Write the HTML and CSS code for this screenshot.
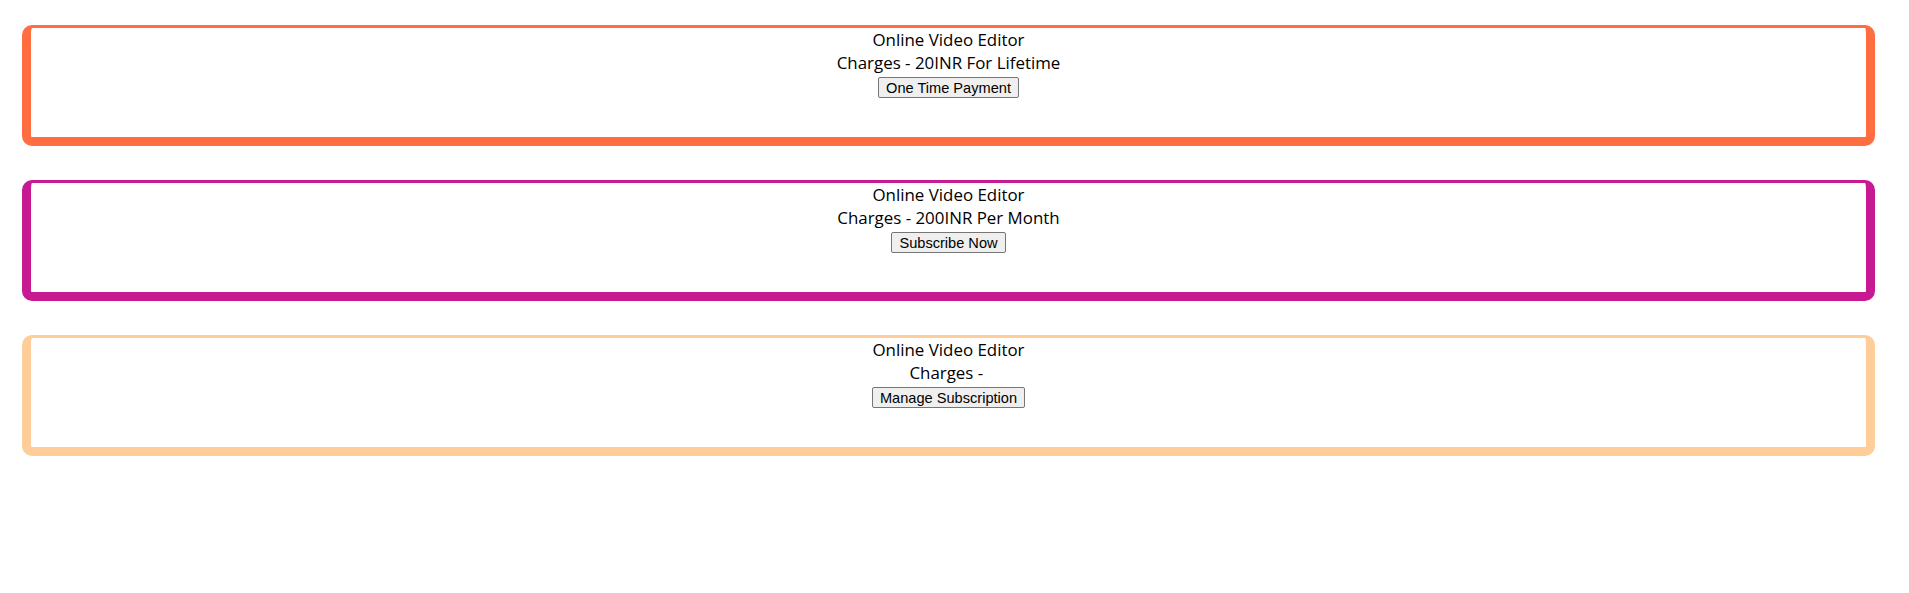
FILE: index.html
```html
<!DOCTYPE html>
<html>
<head>
<meta charset="utf-8">
<link rel="stylesheet" href="styles.css">
</head>
<body>
<div class="list">
  <div class="card card-orange">
    <div class="line">Online Video Editor</div>
    <div class="line">Charges - 20INR For Lifetime</div>
    <button class="btn">One Time Payment</button>
  </div>
  <div class="card card-magenta">
    <div class="line">Online Video Editor</div>
    <div class="line">Charges - 200INR Per Month</div>
    <button class="btn">Subscribe Now</button>
  </div>
  <div class="card card-peach">
    <div class="line">Online Video Editor</div>
    <div class="line">Charges - </div>
    <button class="btn">Manage Subscription</button>
  </div>
</div>
</body>
</html>
```

FILE: styles.css
```css
html, body {
  margin: 0;
  padding: 0;
  background: #fff;
}
body {
  font-family: "Open Sans", "Noto Sans", sans-serif;
  font-size: 16.9px;
  color: #000;
}
.list {
  display: flex;
  flex-direction: column;
  gap: 34px;
  padding: 25px 34px 0 22px;
}
.card {
  box-sizing: border-box;
  height: 121px;
  border-style: solid;
  border-width: 3px 9px 9px 9px;
  border-radius: 10px;
  display: flex;
  flex-direction: column;
  align-items: center;
  text-align: center;
}
.card-orange { border-color: #ff6d40; }
.card-magenta { border-color: #c71a92; }
.card-peach { border-color: #ffcd99; }
.line {
  line-height: 23px;
  white-space: pre;
}
.btn {
  margin-top: 3px;
  font-family: "Liberation Sans", Arial, sans-serif;
  font-size: 14.6px;
  height: 21px;
  padding: 0 7px;
  background: #efefef;
  border: 1px solid #767676;
  border-radius: 2px;
  color: #000;
}
```
